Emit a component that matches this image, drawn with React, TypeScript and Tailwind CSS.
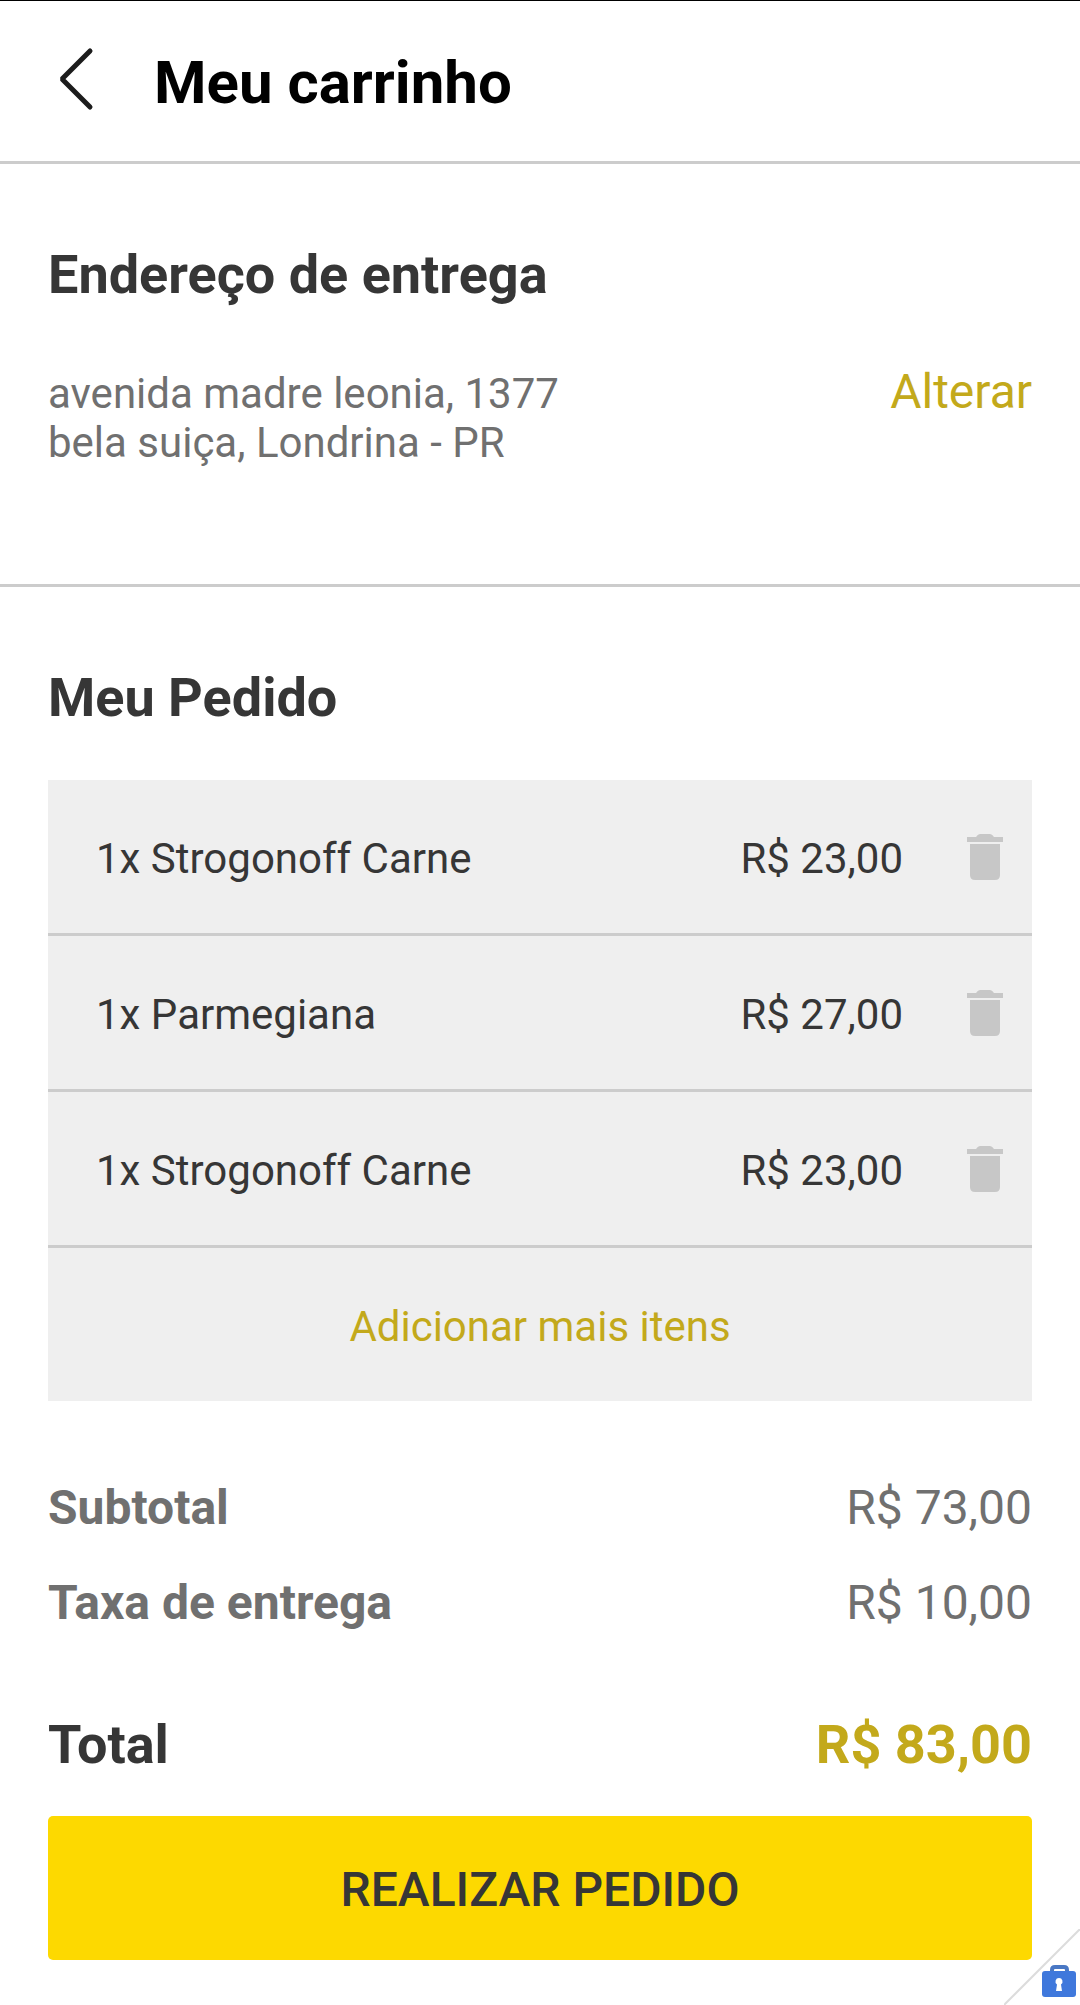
import React from 'react';

type Item = { id: number; name: string; price: string };

const items: Item[] = [
  { id: 1, name: '1x Strogonoff Carne', price: 'R$ 23,00' },
  { id: 2, name: '1x Parmegiana', price: 'R$ 27,00' },
  { id: 3, name: '1x Strogonoff Carne', price: 'R$ 23,00' },
];

function BackIcon() {
  return (
    <svg width="36" height="64" viewBox="0 0 36 64" fill="none" aria-hidden="true">
      <path d="M32 4 L4 32 L32 60" stroke="#1c1c1c" strokeWidth="5" strokeLinecap="round" strokeLinejoin="bevel" />
    </svg>
  );
}

function TrashIcon() {
  return (
    <svg width="36" height="46" viewBox="0 0 36 46" fill="#c7c7c7" aria-hidden="true">
      <path d="M0 3 H9 Q11 0 13 0 H23 Q25 0 27 3 H36 V8 H0 Z" />
      <path d="M3 10 H33 V41 Q33 46 28 46 H8 Q3 46 3 41 Z" />
    </svg>
  );
}

function WorkProfileBadge() {
  return (
    <div className="absolute right-0 bottom-0" aria-hidden="true">
      <svg width="76" height="76" viewBox="0 0 76 76" fill="none">
        <path d="M76 0 L0 76" stroke="#dcdcdc" strokeWidth="2" />
        <path d="M48 44 V41 Q48 38 51 38 H60 Q63 38 63 41 V44" stroke="#4a78c4" strokeWidth="4" />
        <rect x="38" y="42" width="34" height="26" rx="3" fill="#3f78dc" />
        <path
          d="M55 49 a3.5 3.5 0 0 1 2 6.400 L58 62 H52 L53 55.400 A3.500 3.500 0 0 1 55 49 Z"
          fill="#ffffff"
        />
      </svg>
    </div>
  );
}

export default function App() {
  return (
    <div className="relative min-h-screen border-t border-black bg-white font-['Roboto',sans-serif] text-[42px] leading-[49px] text-[#363636]">
      <header className="flex h-[163px] items-center border-b-3 border-[#cccccc] pl-[58px]">
        <button type="button" aria-label="Voltar" className="-mt-1">
          <BackIcon />
        </button>
        <h1 className="ml-[60px] pt-1 text-[60px] leading-[72px] font-bold text-black">Meu carrinho</h1>
      </header>

      <section className="border-b-3 border-[#cccccc] px-12 pt-[79px] pb-[117px]">
        <h2 className="text-[54px] leading-[64px] font-bold">Endereço de entrega</h2>
        <div className="mt-[60px] flex items-baseline justify-between text-[#707070]">
          <address className="not-italic">
            avenida madre leonia, 1377
            <br />
            bela suiça, Londrina - PR
          </address>
          <button type="button" className="text-[48px] leading-[49px] text-[#c3a91b]">
            Alterar
          </button>
        </div>
      </section>

      <main className="px-12 pt-[79px] pb-[45px]">
        <h2 className="text-[54px] leading-[64px] font-bold">Meu Pedido</h2>

        <div className="mt-[50px] bg-[#efefef]">
          <ul>
            {items.map((item) => (
              <li key={item.id} className="flex h-[156px] items-center border-b-3 border-[#cccccc] pr-[29px] pl-12">
                <span className="flex-1 pt-1">{item.name}</span>
                <span className="pt-1">{item.price}</span>
                <button type="button" aria-label={`Remover ${item.name}`} className="ml-16">
                  <TrashIcon />
                </button>
              </li>
            ))}
          </ul>
          <button type="button" className="h-[153px] w-full pt-1 text-[#c3a91b]">
            Adicionar mais itens
          </button>
        </div>

        <dl className="mt-[79px] text-[48px] leading-[56px] text-[#707070]">
          <div className="flex justify-between">
            <dt className="font-bold">Subtotal</dt>
            <dd>R$ 73,00</dd>
          </div>
          <div className="mt-[39px] flex justify-between">
            <dt className="font-bold">Taxa de entrega</dt>
            <dd>R$ 10,00</dd>
          </div>
          <div className="mt-[82px] flex justify-between text-[54px] leading-[64px] font-bold">
            <dt className="text-[#363636]">Total</dt>
            <dd className="text-[#c3a91b]">R$ 83,00</dd>
          </div>
        </dl>

        <button
          type="button"
          className="mt-[39px] h-36 w-full rounded-[5px] bg-[#fdd900] pt-1 text-[48px] leading-[56px] font-medium"
        >
          REALIZAR PEDIDO
        </button>
      </main>

      <WorkProfileBadge />
    </div>
  );
}
